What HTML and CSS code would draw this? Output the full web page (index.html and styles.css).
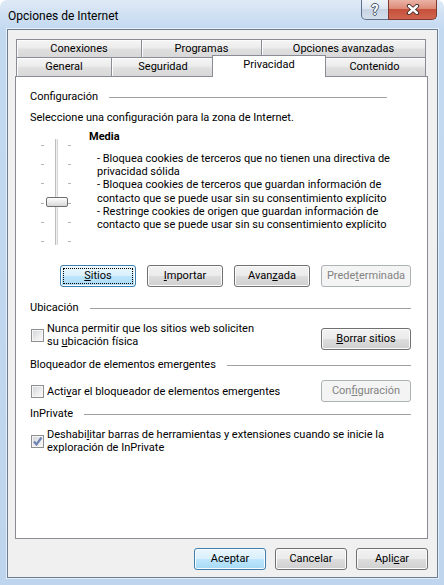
FILE: index.html
```html
<!DOCTYPE html>
<html lang="es">
<head>
  <meta charset="UTF-8">
  <title>Opciones de Internet</title>
  <link rel="stylesheet" href="styles.css">
</head>
<body>
  <div class="window">
    <div class="titlebar">
      <span class="title">Opciones de Internet</span>
      <div class="caption">
        <button class="cap help">?</button>
        <button class="cap close">
          <svg width="14" height="11" viewBox="0 0 14 11">
            <path d="M3 2 L11 9 M11 2 L3 9" stroke="#3b2a28" stroke-width="4.2" stroke-linecap="round"/>
            <path d="M3 2 L11 9 M11 2 L3 9" stroke="#fff" stroke-width="2.4" stroke-linecap="round"/>
          </svg>
        </button>
      </div>
    </div>

    <div class="client">
      <div class="tabs">
        <div class="tab-row">
          <div class="tab t-conex">Conexiones</div>
          <div class="tab t-prog">Programas</div>
          <div class="tab t-avanz">Opciones avanzadas</div>
        </div>
        <div class="tab-row">
          <div class="tab t-gen">General</div>
          <div class="tab t-seg">Seguridad</div>
          <div class="tab t-priv active">Privacidad</div>
          <div class="tab t-cont">Contenido</div>
        </div>
      </div>

      <div class="panel">
        <div class="group-title">Configuración<span class="rule short"></span></div>
        <p class="hint">Seleccione una configuración para la zona de Internet.</p>

        <div class="level">
          <div class="slider">
            <div class="ticks"><i></i><i></i><i></i><i></i><i></i><i></i></div>
            <div class="track"><span class="thumb"></span></div>
            <div class="ticks"><i></i><i></i><i></i><i></i><i></i><i></i></div>
          </div>
          <div class="level-text">
            <div class="level-name">Media</div>
            <div class="level-desc">
              - Bloquea cookies de terceros que no tienen una directiva de<br>
              privacidad sólida<br>
              - Bloquea cookies de terceros que guardan información de<br>
              contacto que se puede usar sin su consentimiento explícito<br>
              - Restringe cookies de origen que guardan información de<br>
              contacto que se puede usar sin su consentimiento explícito
            </div>
          </div>
        </div>

        <div class="btn-row">
          <button class="btn default"><span class="focus"><u>S</u>itios</span></button>
          <button class="btn"><u>I</u>mportar</button>
          <button class="btn">Avan<u>z</u>ada</button>
          <button class="btn wide" disabled>Prede<u>t</u>erminada</button>
        </div>

        <div class="group-title gt-ubic">Ubicación<span class="rule"></span></div>
        <div class="opt-row">
          <label class="check">
            <span class="box"></span>
            <span>Nunca permitir que los sitios web soliciten<br>su <u>u</u>bicación física</span>
          </label>
          <button class="btn wide push"><u>B</u>orrar sitios</button>
        </div>

        <div class="group-title gt-popup">Bloqueador de elementos emergentes<span class="rule"></span></div>
        <div class="opt-row">
          <label class="check single">
            <span class="box"></span>
            <span>Acti<u>v</u>ar el bloqueador de elementos emergentes</span>
          </label>
          <button class="btn wide" disabled>Con<u>f</u>iguración</button>
        </div>

        <div class="group-title gt-inpriv">InPrivate<span class="rule"></span></div>
        <label class="check last">
          <span class="box checked">
            <svg width="11" height="11" viewBox="0 0 11 11">
              <path d="M2 5.5 L4.5 8.5 L9.5 1.5" fill="none" stroke="#6f84b3" stroke-width="2.2"/>
            </svg>
          </span>
          <span>Deshabi<u>l</u>itar barras de herramientas y extensiones cuando se inicie la<br>exploración de InPrivate</span>
        </label>
      </div>

      <div class="footer">
        <button class="btn small default">Aceptar</button>
        <button class="btn small">Cancelar</button>
        <button class="btn small">Apli<u>c</u>ar</button>
      </div>
    </div>
  </div>
</body>
</html>
```

FILE: styles.css
```css
body {
  margin: 0;
  background: #fff;
  font-family: Roboto, "Noto Sans", sans-serif;
  font-size: 11px;
  color: #000;
}

/* window frame */
.window {
  width: 444px;
  height: 585px;
  box-sizing: border-box;
  padding: 0 6px 7px 7px;
  border-radius: 7px 7px 0 0;
  background: linear-gradient(180deg, #dfeaf7 0, #d0e1f3 14px, #c3d9f0 30px, #bfd5ee 100%);
  display: flex;
  flex-direction: column;
}
.titlebar {
  height: 29px;
  display: flex;
  justify-content: space-between;
}
.title { margin: 9px 0 0 1px; font-size: 12px; line-height: 14px; }
.caption { display: flex; margin-right: 1px; }
.cap {
  height: 20px;
  padding: 0;
  border: 1px solid #5f718a;
  border-top: none;
  font: inherit;
  display: flex;
  align-items: center;
  justify-content: center;
}
.help {
  width: 28px;
  border-radius: 0 0 0 5px;
  background: linear-gradient(180deg, #eef3f9 0, #dde6f1 45%, #c7d3e3 50%, #d4dfec 100%);
  color: #fff;
  font-weight: bold;
  font-size: 14px;
  text-shadow: 1px 0 0 #4a5a70, -1px 0 0 #4a5a70, 0 1px 0 #4a5a70, 0 -1px 0 #4a5a70;
}
.close {
  width: 49px;
  margin-left: -1px;
  border-color: #7e3a2e;
  border-radius: 0 0 5px 0;
  background: linear-gradient(180deg, #eab3a6 0, #dc8a78 45%, #c7503b 50%, #d0644e 100%);
}

.client {
  flex: 1;
  border: 1px solid #6b7d93;
  box-shadow: 0 0 0 1px rgba(255, 255, 255, 0.6);
  background: #f0f0f0;
  padding: 9px 9px 0 7px;
}

/* tab strip */
.tabs { margin-left: 1px; }
.tab-row { display: flex; }
.tab {
  box-sizing: border-box;
  height: 18px;
  margin-left: -1px;
  border: 1px solid #898c95;
  border-bottom: none;
  background: linear-gradient(180deg, #f5f5f5 0, #ececec 45%, #dfdfdf 55%, #d8d8d8 100%);
  box-shadow: inset 1px 1px 0 #fcfcfc;
  text-align: center;
  line-height: 17px;
}
.tab-row .tab:first-child { margin-left: 0; }
.tab-row + .tab-row .tab { height: 19px; line-height: 18px; }
.t-conex { width: 126px; }
.t-prog { width: 121px; }
.t-avanz { width: 165px; }
.t-gen { width: 96px; }
.t-seg { width: 104px; }
.t-priv { width: 110px; }
.t-cont { width: 103px; }
.tab-row .tab.active {
  position: relative;
  z-index: 1;
  width: 114px;
  height: 22px;
  margin: -2px -2px -1px -3px;
  background: #fff;
  box-shadow: none;
  line-height: 17px;
}

/* property page */
.panel {
  box-sizing: border-box;
  height: 463px;
  border: 1px solid #898c95;
  background: #fff;
  padding: 13px 16px 0 14px;
}
.group-title {
  display: flex;
  align-items: center;
  gap: 11px;
  line-height: 13px;
  white-space: nowrap;
}
.rule { flex: 1; border-top: 1px solid #a0a0a0; margin-top: 2px; }
.rule.short { margin-right: 24px; }
.hint { margin: 8px 0 0; line-height: 13px; }

.level {
  display: grid;
  grid-template-columns: 59px 1fr;
  margin-top: 6px;
}
.slider {
  display: flex;
  height: 106px;
  margin: 9px 0 0 11px;
}
.ticks {
  width: 3px;
  display: flex;
  flex-direction: column;
  justify-content: space-between;
  padding: 6px 0 3px;
}
.ticks i { height: 1px; background: #b4b4b4; }
.track {
  position: relative;
  width: 1px;
  margin: 0 10px 0 11px;
  background: #eef0f0;
  border-left: 1px solid #bdbdbd;
  border-right: 1px solid #d8d8d8;
}
.thumb {
  position: absolute;
  top: 58px;
  left: -10px;
  width: 20px;
  height: 8px;
  border: 1px solid #6f6f6f;
  border-radius: 2px;
  background: linear-gradient(180deg, #fdfdfd 0, #ececec 50%, #d6d6d6 100%);
}
.level-name { font-weight: bold; line-height: 13px; }
.level-desc {
  margin: 9px 0 0 8px;
  line-height: 13.2px;
  white-space: nowrap;
}

/* push buttons */
.btn {
  box-sizing: border-box;
  height: 22px;
  width: 76px;
  padding: 0;
  border: 1px solid #707070;
  border-radius: 3px;
  background: linear-gradient(180deg, #f2f2f2 0, #ebebeb 48%, #dddddd 52%, #cfcfcf 100%);
  box-shadow: inset 0 0 0 1px #fbfbfb;
  font: inherit;
  color: #000;
  line-height: 18px;
  white-space: nowrap;
}
.btn.wide { width: 90px; }
.btn.small { width: 72px; }
.btn.default {
  border-color: #3c7fb1;
  background: linear-gradient(180deg, #eaf6fd 0, #d9f0fc 48%, #bee6fd 52%, #a7d9f5 100%);
}
.btn:disabled {
  border-color: #adb2b5;
  background: #f4f4f4;
  box-shadow: none;
  color: #838383;
}
.focus {
  display: block;
  margin: 2px;
  border: 1px dotted #000;
  line-height: 14px;
}
.btn-row {
  display: flex;
  justify-content: flex-end;
  gap: 11px;
  margin-top: 20px;
}

/* check boxes */
.opt-row {
  display: flex;
  justify-content: space-between;
  align-items: flex-start;
}
.check {
  display: flex;
  align-items: center;
  gap: 3px;
  margin-left: 1px;
  line-height: 13px;
  white-space: nowrap;
}
.box {
  box-sizing: border-box;
  width: 13px;
  height: 13px;
  flex: none;
  border: 1px solid #8e8f8f;
  background: linear-gradient(135deg, #cfd1d4 0, #eeeeee 60%, #fafafa 100%);
  box-shadow: inset 0 0 0 1px #f6f6f6;
  display: flex;
  align-items: center;
  justify-content: center;
}
.gt-ubic { margin-top: 14px; }
.gt-ubic + .opt-row { margin-top: 8px; }
.push { margin-top: 6px; }
.gt-popup { margin-top: 8px; }
.gt-popup + .opt-row { margin-top: 9px; }
.check.single { margin-top: 5px; }
.gt-inpriv { margin-top: 5px; }
.check.last { margin-top: 8px; }

.footer {
  display: flex;
  justify-content: flex-end;
  gap: 9px;
  padding-top: 9px;
}
```
